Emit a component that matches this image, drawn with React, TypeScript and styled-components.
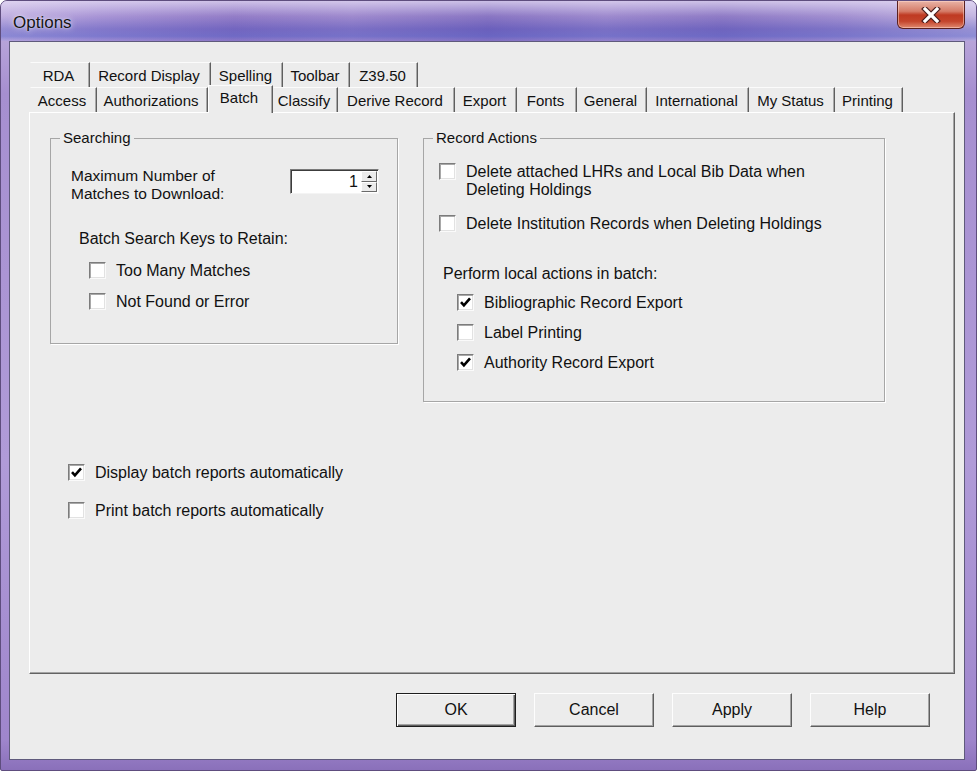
import React from "react";
import styled, { createGlobalStyle } from "styled-components";

const Global = createGlobalStyle`
  html, body { margin: 0; padding: 0; background: #ffffff; }
  body { font-family: "Liberation Sans", Arial, sans-serif; color: #111; }
  * { box-sizing: border-box; }
`;

const Window = styled.div`
  width: 977px;
  height: 771px;
  display: flex;
  flex-direction: column;
  padding: 0 11px 10px 8px;
  border-radius: 7px 7px 2px 2px;
  border: 1px solid #5e4d7e;
  background: linear-gradient(to bottom, #c4b3e0 0%, #a68fd0 12%, #b09bd8 60%, #9f86cc 96%, #8a70ba 100%);
`;

const TitleBar = styled.div`
  height: 40px;
  margin: 0 -11px 0 -8px;
  padding: 0 11px 0 11px;
  display: flex;
  align-items: flex-start;
  justify-content: space-between;
  border-radius: 6px 6px 0 0;
  background:
    linear-gradient(to bottom, rgba(236, 228, 248, 0.7) 0%, rgba(236, 228, 248, 0.1) 38%, rgba(60, 72, 185, 0.3) 70%, rgba(80, 96, 200, 0.45) 88%, rgba(150, 140, 215, 0.2) 100%),
    linear-gradient(90deg, #bcaade 0%, #a28dd2 10%, #8a72c2 24%, #9680c9 36%, #7f6abd 50%, #9580c9 62%, #8570c0 74%, #9a86cc 86%, #bfb0df 100%);
`;

const Title = styled.div`
  font-family: "Liberation Sans", Arial, sans-serif;
  font-size: 17px;
  color: #151515;
  margin-top: 12px;
  margin-left: 1px;
  text-shadow: 0 0 6px rgba(255, 255, 255, 0.85), 0 0 2px rgba(255, 255, 255, 0.6);
`;

const CloseButton = styled.div`
  width: 68px;
  height: 28px;
  display: flex;
  align-items: center;
  justify-content: center;
  border: 1px solid #5a2020;
  border-top: none;
  border-radius: 0 0 6px 6px;
  background: linear-gradient(to bottom, #e9b3a6 0%, #d57c68 38%, #bf3a22 52%, #c4452c 75%, #e08a70 100%);
  box-shadow: inset 0 0 0 1px rgba(255, 220, 210, 0.5);
`;

const Client = styled.div`
  flex: 1;
  display: flex;
  flex-direction: column;
  padding: 20px 9px 32px 19px;
  background: #ececec;
  border: 1px solid #5f5a7c;
`;

const TabStrip = styled.div`
  display: flex;
  flex-direction: column;
  margin-left: 1px;
`;

const TabRow = styled.div`
  display: flex;
  height: 25px;
  align-items: flex-end;
`;

const Tab = styled.div<{ $w: number; $active?: boolean }>`
  width: ${(p) => p.$w}px;
  height: ${(p) => (p.$active ? 28 : 25)}px;
  margin-bottom: ${(p) => (p.$active ? -1 : 0)}px;
  padding-bottom: ${(p) => (p.$active ? 4 : 0)}px;
  padding-right: 3px;
  position: relative;
  z-index: ${(p) => (p.$active ? 2 : 1)};
  display: flex;
  align-items: center;
  justify-content: center;
  font-size: 15px;
  color: #111;
  white-space: nowrap;
  background: #ececec;
  border-top: 1px solid #fbfbfb;
  border-left: 1px solid ${(p) => (p.$active ? "#ffffff" : "transparent")};
  border-right: 1px solid #5f5f5f;
  box-shadow: inset -1px 0 0 #a9a9a9;
`;

const Panel = styled.div`
  flex: 1;
  display: flex;
  flex-direction: column;
  padding: 16px 20px 0 20px;
  border: 1px solid;
  border-color: #ffffff #636363 #636363 #ffffff;
  box-shadow: inset -1px -1px 0 #a4a4a4;
`;

const TopRow = styled.div`
  display: flex;
  gap: 25px;
  align-items: flex-start;
`;

const GroupBox = styled.fieldset<{ $w: number; $h: number }>`
  width: ${(p) => p.$w}px;
  height: ${(p) => p.$h}px;
  margin: 0;
  padding: 0;
  min-width: 0;
  border: 1px solid #a6a6a6;
  box-shadow: 1px 1px 0 #ffffff;
`;

const Legend = styled.legend`
  font-size: 15px;
  line-height: 18px;
  padding: 0 3px;
  margin-left: 9px;
  color: #111;
`;

const GroupBody = styled.div<{ $pt: number; $pl: number; $pr?: number }>`
  display: flex;
  flex-direction: column;
  padding: ${(p) => p.$pt}px ${(p) => p.$pr ?? 0}px 0 ${(p) => p.$pl}px;
`;

const Text = styled.div<{ $indent?: number; $mt?: number }>`
  font-size: 16px;
  line-height: 18px;
  margin-left: ${(p) => p.$indent ?? 0}px;
  margin-top: ${(p) => p.$mt ?? 0}px;
  white-space: nowrap;
`;

const SpinRow = styled.div`
  display: flex;
  justify-content: space-between;
  align-items: flex-start;
`;

const SpinLabel = styled.div`
  font-size: 15.5px;
  line-height: 18px;
`;

const SpinBox = styled.div`
  width: 89px;
  height: 25px;
  margin-top: 2px;
  display: flex;
  background: #ffffff;
  border: 1px solid;
  border-color: #7a7a7a #f4f4f4 #f4f4f4 #7a7a7a;
  box-shadow: inset 1px 1px 0 #3c3c3c;
`;

const SpinValue = styled.div`
  flex: 1;
  font-size: 16px;
  line-height: 22px;
  text-align: right;
  padding-right: 3px;
  padding-top: 1px;
`;

const SpinButtons = styled.div`
  width: 17px;
  display: flex;
  flex-direction: column;
  padding: 1px 1px 1px 0;
`;

const SpinButton = styled.div`
  flex: 1;
  display: flex;
  align-items: center;
  justify-content: center;
  background: #ececec;
  border: 1px solid;
  border-color: #ffffff #6a6a6a #6a6a6a #ffffff;
`;

const CheckRow = styled.div<{ $indent?: number; $mt?: number; $gap?: number }>`
  display: flex;
  align-items: flex-start;
  gap: ${(p) => p.$gap ?? 10}px;
  margin-left: ${(p) => p.$indent ?? 0}px;
  margin-top: ${(p) => p.$mt ?? 0}px;
`;

const Box = styled.div`
  width: 17px;
  height: 17px;
  flex: none;
  margin-top: 0px;
  display: flex;
  align-items: center;
  justify-content: center;
  background: #ffffff;
  border: 1px solid;
  border-color: #7c7c7c #fafafa #fafafa #7c7c7c;
  box-shadow: inset 1px 1px 0 #a8a8a8, inset -1px -1px 0 #e2e2e2;
`;

const Label = styled.div<{ $max?: number }>`
  font-size: 16px;
  line-height: 18px;
  max-width: ${(p) => (p.$max ? `${p.$max}px` : "none")};
`;

const BottomChecks = styled.div`
  display: flex;
  flex-direction: column;
  margin-top: 62px;
  margin-left: 18px;
`;

const Footer = styled.div`
  display: flex;
  justify-content: flex-end;
  gap: 18px;
  margin-top: 19px;
  padding-right: 25px;
`;

const Button = styled.div<{ $default?: boolean }>`
  width: 120px;
  height: 34px;
  display: flex;
  align-items: center;
  justify-content: center;
  font-size: 16px;
  color: #111;
  background: #ececec;
  border: 1px solid;
  border-color: ${(p) => (p.$default ? "#1e1e1e" : "#fdfdfd #5e5e5e #5e5e5e #fdfdfd")};
  box-shadow: ${(p) =>
    p.$default
      ? "inset 1px 1px 0 #ffffff, inset -1px -1px 0 #5e5e5e, inset -2px -2px 0 #a3a3a3"
      : "inset -1px -1px 0 #a3a3a3"};
`;

const Check = ({ on }: { on?: boolean }) => (
  <Box>
    {on && (
      <svg width="13" height="13" viewBox="0 0 13 13">
        <polyline points="2,6.2 4.9,9.4 11,2.4" fill="none" stroke="#000" strokeWidth="2.6" />
      </svg>
    )}
  </Box>
);

const row1 = [
  { t: "RDA", w: 60 },
  { t: "Record Display", w: 121 },
  { t: "Spelling", w: 72 },
  { t: "Toolbar", w: 67 },
  { t: "Z39.50", w: 68 },
];

const row2 = [
  { t: "Access", w: 67 },
  { t: "Authorizations", w: 111 },
  { t: "Batch", w: 65, active: true },
  { t: "Classify", w: 65 },
  { t: "Derive Record", w: 117 },
  { t: "Export", w: 62 },
  { t: "Fonts", w: 60 },
  { t: "General", w: 70 },
  { t: "International", w: 102 },
  { t: "My Status", w: 86 },
  { t: "Printing", w: 68 },
];

export default function App() {
  return (
    <>
      <Global />
      <Window>
        <TitleBar>
          <Title>Options</Title>
          <CloseButton>
            <svg width="20" height="16" viewBox="0 0 20 16">
              <path d="M4 2 L16 14 M16 2 L4 14" stroke="#4a1c1c" strokeWidth="5.5" strokeLinecap="square" />
              <path d="M4 2 L16 14 M16 2 L4 14" stroke="#ffffff" strokeWidth="3.2" strokeLinecap="square" />
            </svg>
          </CloseButton>
        </TitleBar>
        <Client>
          <TabStrip>
            <TabRow>
              {row1.map((t) => (
                <Tab key={t.t} $w={t.w}>
                  {t.t}
                </Tab>
              ))}
            </TabRow>
            <TabRow>
              {row2.map((t) => (
                <Tab key={t.t} $w={t.w} $active={t.active}>
                  {t.t}
                </Tab>
              ))}
            </TabRow>
          </TabStrip>
          <Panel>
            <TopRow>
              <GroupBox $w={348} $h={215}>
                <Legend>Searching</Legend>
                <GroupBody $pt={20} $pl={20} $pr={18}>
                  <SpinRow>
                    <SpinLabel>
                      Maximum Number of
                      <br />
                      Matches to Download:
                    </SpinLabel>
                    <SpinBox>
                      <SpinValue>1</SpinValue>
                      <SpinButtons>
                        <SpinButton>
                          <svg width="5" height="3" viewBox="0 0 5 3">
                            <path d="M0 3 L2.5 0 L5 3 Z" fill="#000" />
                          </svg>
                        </SpinButton>
                        <SpinButton>
                          <svg width="5" height="3" viewBox="0 0 5 3">
                            <path d="M0 0 L2.5 3 L5 0 Z" fill="#000" />
                          </svg>
                        </SpinButton>
                      </SpinButtons>
                    </SpinBox>
                  </SpinRow>
                  <Text $indent={8} $mt={27}>
                    Batch Search Keys to Retain:
                  </Text>
                  <CheckRow $indent={18} $mt={14}>
                    <Check />
                    <Label>Too Many Matches</Label>
                  </CheckRow>
                  <CheckRow $indent={18} $mt={13}>
                    <Check />
                    <Label>Not Found or Error</Label>
                  </CheckRow>
                </GroupBody>
              </GroupBox>
              <GroupBox $w={462} $h={273}>
                <Legend>Record Actions</Legend>
                <GroupBody $pt={16} $pl={15}>
                  <CheckRow>
                    <Check />
                    <Label $max={345}>Delete attached LHRs and Local Bib Data when Deleting Holdings</Label>
                  </CheckRow>
                  <CheckRow $mt={16}>
                    <Check />
                    <Label>Delete Institution Records when Deleting Holdings</Label>
                  </CheckRow>
                  <Text $indent={4} $mt={32}>
                    Perform local actions in batch:
                  </Text>
                  <CheckRow $indent={18} $mt={11}>
                    <Check on />
                    <Label>Bibliographic Record Export</Label>
                  </CheckRow>
                  <CheckRow $indent={18} $mt={12}>
                    <Check />
                    <Label>Label Printing</Label>
                  </CheckRow>
                  <CheckRow $indent={18} $mt={12}>
                    <Check on />
                    <Label>Authority Record Export</Label>
                  </CheckRow>
                </GroupBody>
              </GroupBox>
            </TopRow>
            <BottomChecks>
              <CheckRow>
                <Check on />
                <Label>Display batch reports automatically</Label>
              </CheckRow>
              <CheckRow $mt={20}>
                <Check />
                <Label>Print batch reports automatically</Label>
              </CheckRow>
            </BottomChecks>
          </Panel>
          <Footer>
            <Button $default>OK</Button>
            <Button>Cancel</Button>
            <Button>Apply</Button>
            <Button>Help</Button>
          </Footer>
        </Client>
      </Window>
    </>
  );
}
